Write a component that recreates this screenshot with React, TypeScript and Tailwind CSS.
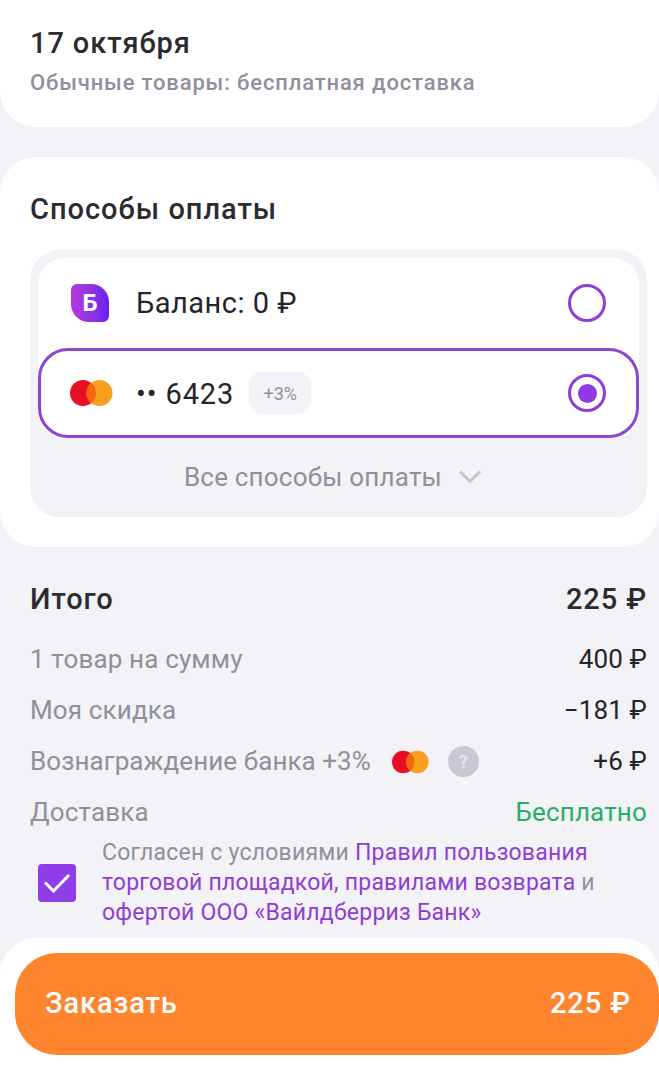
const font = { fontFamily: "Roboto, 'Noto Sans', sans-serif" };

function CardLogo({ small }: { small?: boolean }) {
  return (
    <svg width={small ? 37 : 43} height={small ? 26 : 30} viewBox="0 0 43 30">
      <circle cx="13" cy="15" r="13" fill="#e60f25" />
      <circle cx="29.5" cy="15" r="13" fill="#f99f1f" />
      <path d="M21.25 4.95A13 13 0 0 1 21.25 25.05A13 13 0 0 1 21.25 4.95z" fill="#f5640f" />
    </svg>
  );
}

function Radio({ checked }: { checked?: boolean }) {
  return (
    <div className="flex h-[38px] w-[38px] items-center justify-center rounded-full border-[3px] border-[#8f3fd8]">
      {checked && <div className="h-[19px] w-[19px] rounded-full bg-[#9237e8]" />}
    </div>
  );
}

function Row({ label, value, valueClass }: { label: React.ReactNode; value: string; valueClass?: string }) {
  return (
    <div className="flex h-[51px] items-center justify-between text-[26px] tracking-[0.15px] text-[#8f8f9e]">
      <div className="flex items-center">{label}</div>
      <span className={valueClass ?? "text-[#242429]"}>{value}</span>
    </div>
  );
}

export default function App() {
  return (
    <div className="h-[1080px] w-[659px] overflow-hidden bg-[#f2f2f7]" style={font}>
      <section className="h-[127px] rounded-b-[36px] bg-white px-[30px] pt-[24px]">
        <div className="text-[29px] font-medium leading-[38px] tracking-[0.9px] text-[#2b2b30]">17 октября</div>
        <div className="mt-[6px] text-[22px] font-medium leading-[30px] tracking-[0.85px] text-[#8f8f9e]">
          Обычные товары: бесплатная доставка
        </div>
      </section>

      <section className="mt-[30px] h-[390px] rounded-[36px] bg-white pl-[30px] pr-[12px] pt-[32px]">
        <h2 className="text-[29px] font-medium leading-[40px] tracking-[1px] text-[#2b2b30]">Способы оплаты</h2>
        <div className="mt-[21px] h-[267px] rounded-[30px] bg-[#f2f2f7] p-[8px]">
          <div className="rounded-[26px] bg-white">
            <div className="flex h-[90px] items-center pl-[33px] pr-[33px]">
              <div className="flex h-[38px] w-[38px] items-center justify-center rounded-[6px_18px_6px_18px] bg-gradient-to-r from-[#b53ad6] to-[#6a1ff0] text-[24px] font-bold text-white">
                Б
              </div>
              <span className="ml-[27px] mt-[2px] text-[29px] tracking-[0.5px] text-[#242429]">Баланс: 0 ₽</span>
              <div className="ml-auto">
                <Radio />
              </div>
            </div>
            <div className="flex h-[90px] items-center rounded-[30px] border-[3px] border-[#8f46d2] pl-[29px] pr-[30px]">
              <CardLogo />
              <span className="ml-[23px] mt-[3px] text-[29px] tracking-[0.9px] text-[#242429]">•• 6423</span>
              <span className="ml-[15px] flex h-[42px] w-[62px] items-center justify-center rounded-[14px] bg-[#f2f2f7] text-[18px] text-[#8f8f9e]">
                +3%
              </span>
              <div className="ml-auto">
                <Radio checked />
              </div>
            </div>
          </div>
          <div className="mt-[19px] flex items-center justify-center gap-[16px] pr-[11px] text-[26px] leading-[40px] tracking-[0.2px] text-[#8f8f9e]">
            Все способы оплаты
            <svg width="24" height="16" viewBox="0 0 24 16" fill="none" stroke="#c4c4cf" strokeWidth="3">
              <path d="M2 2.5l10 10 10-10" />
            </svg>
          </div>
        </div>
      </section>

      <section className="pl-[30px] pr-[12px] pt-[28px]">
        <div className="flex h-[50px] items-center justify-between text-[29px] font-medium tracking-[0.9px] text-[#2b2b30]">
          <span>Итого</span>
          <span>225 ₽</span>
        </div>
        <div className="mt-[9px]">
          <Row label="1 товар на сумму" value="400 ₽" />
          <Row label="Моя скидка" value="−181 ₽" />
          <Row
            label={
              <>
                <span className="tracking-[0.07px]">Вознаграждение банка +3%</span>
                <span className="ml-[21px] flex">
                  <CardLogo small />
                </span>
                <span className="ml-[19px] flex h-[31px] w-[31px] items-center justify-center rounded-full bg-[#c8c8d2] text-[18px] font-bold text-[#e4e4ea]">
                  ?
                </span>
              </>
            }
            value="+6 ₽"
          />
          <Row label="Доставка" value="Бесплатно" valueClass="text-[#27ae6b]" />
        </div>
        <div className="flex items-center">
          <div className="ml-[8px] flex h-[38px] w-[38px] shrink-0 items-center justify-center rounded-[4px] bg-[#8f3de8]">
            <svg width="28" height="22" viewBox="0 0 28 22" fill="none" stroke="white" strokeWidth="3">
              <path d="M2 10.5l8.5 8.5L26 3" />
            </svg>
          </div>
          <p className="ml-[26px] text-[23px] leading-[30px] tracking-[0.22px] text-[#8f8f9e]">
            Согласен с условиями <span className="text-[#8f3fd0]">Правил пользования торговой площадкой, правилами возврата</span> и{" "}
            <span className="text-[#8f3fd0]">офертой ООО «Вайлдберриз Банк»</span>
          </p>
        </div>
      </section>

      <footer className="mt-[10px] h-[160px] rounded-t-[36px] bg-white pl-[15px] pt-[15px]">
        <button className="flex h-[102px] w-[644px] items-center justify-between rounded-[42px] bg-[#ff842e] pl-[30px] pr-[28px] text-[29px] font-medium tracking-[0.9px] text-white">
          <span>Заказать</span>
          <span>225 ₽</span>
        </button>
      </footer>
    </div>
  );
}
